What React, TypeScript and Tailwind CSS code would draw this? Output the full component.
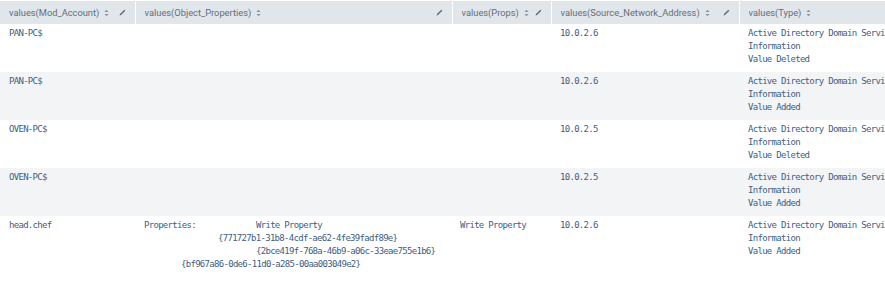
import React from 'react';

interface Row {
  account: string;
  props?: React.ReactNode;
  propsCol?: string;
  addr: string;
  type: string[];
}

const rows: Row[] = [
  { account: 'PAN-PC$', addr: '10.0.2.6', type: ['Active Directory Domain Services', 'Information', 'Value Deleted'] },
  { account: 'PAN-PC$', addr: '10.0.2.6', type: ['Active Directory Domain Services', 'Information', 'Value Added'] },
  { account: 'OVEN-PC$', addr: '10.0.2.5', type: ['Active Directory Domain Services', 'Information', 'Value Deleted'] },
  { account: 'OVEN-PC$', addr: '10.0.2.5', type: ['Active Directory Domain Services', 'Information', 'Value Added'] },
  {
    account: 'head.chef',
    props: (
      <>
        <div className="flex">
          <span className="w-[112px]">Properties:</span>
          <span>Write Property</span>
        </div>
        <div className="pl-[74px]">{'{771727b1-31b8-4cdf-ae62-4fe39fadf89e}'}</div>
        <div className="pl-[112px]">{'{2bce419f-768a-46b9-a06c-33eae755e1b6}'}</div>
        <div className="pl-[37px]">{'{bf967a86-0de6-11d0-a285-00aa003049e2}'}</div>
      </>
    ),
    propsCol: 'Write Property',
    addr: '10.0.2.6',
    type: ['Active Directory Domain Services', 'Information', 'Value Added'],
  },
];

const SortIcon = () => (
  <svg width="5" height="8" viewBox="0 0 5 8" className="inline-block ml-[5px] -mt-px">
    <path d="M0.5 3 L2.5 0.8 L4.5 3 Z" fill="#8a949e" />
    <path d="M0.5 5 L2.5 7.2 L4.5 5 Z" fill="#8a949e" />
  </svg>
);

const Pencil = () => (
  <svg width="7" height="7" viewBox="0 0 7 7" className="shrink-0">
    <path d="M0.6 6.4 L1 5 L5.3 0.7 L6.3 1.7 L2 6 Z" fill="#5c6773" />
  </svg>
);

const Header: React.FC<{ label: string; edit?: boolean; first?: boolean }> = ({ label, edit = true, first }) => (
  <th className={`h-[23px] bg-[#e1e6eb] px-0 font-normal text-left ${first ? '' : 'border-l border-white'}`}>
    <div className="flex items-center justify-between pl-[9px] pr-[9px]">
      <span className="whitespace-nowrap overflow-hidden">
        {label}
        <SortIcon />
      </span>
      {edit && <Pencil />}
    </div>
  </th>
);

export default function App() {
  return (
    <div className="w-[885px] h-[282px] overflow-hidden bg-white pt-px">
      <table
        className="table-fixed border-collapse w-[1040px] text-[9.3px] text-[#626d78]"
        style={{ fontFamily: 'Roboto, "Liberation Sans", sans-serif' }}
      >
        <colgroup>
          <col className="w-[135px]" />
          <col className="w-[317px]" />
          <col className="w-[99px]" />
          <col className="w-[188px]" />
          <col />
        </colgroup>
        <thead>
          <tr>
            <Header label="values(Mod_Account)" first />
            <Header label="values(Object_Properties)" />
            <Header label="values(Props)" />
            <Header label="values(Source_Network_Address)" />
            <Header label="values(Type)" edit={false} />
          </tr>
        </thead>
        <tbody
          className="text-[9px] leading-[13px] tracking-[-0.7px] text-[#40607f]"
          style={{ fontFamily: '"DejaVu Sans Mono", "Liberation Mono", monospace' }}
        >
          {rows.map((r, i) => (
            <tr key={i} className={`align-top ${i % 2 === 1 ? 'bg-[#f2f4f5]' : 'bg-white'} ${i === 4 ? 'h-[70px]' : 'h-[48px]'}`}>
              <td className="pl-[9px] pt-[3px] whitespace-nowrap">{r.account}</td>
              <td className="pl-[9px] pt-[3px] whitespace-nowrap">{r.props}</td>
              <td className="pl-[8px] pt-[3px] whitespace-nowrap">{r.propsCol}</td>
              <td className="pl-[9px] pt-[3px] whitespace-nowrap">{r.addr}</td>
              <td className="pl-[9px] pt-[3px] whitespace-nowrap">
                {r.type.map((t) => (
                  <div key={t}>{t}</div>
                ))}
              </td>
            </tr>
          ))}
        </tbody>
      </table>
    </div>
  );
}
